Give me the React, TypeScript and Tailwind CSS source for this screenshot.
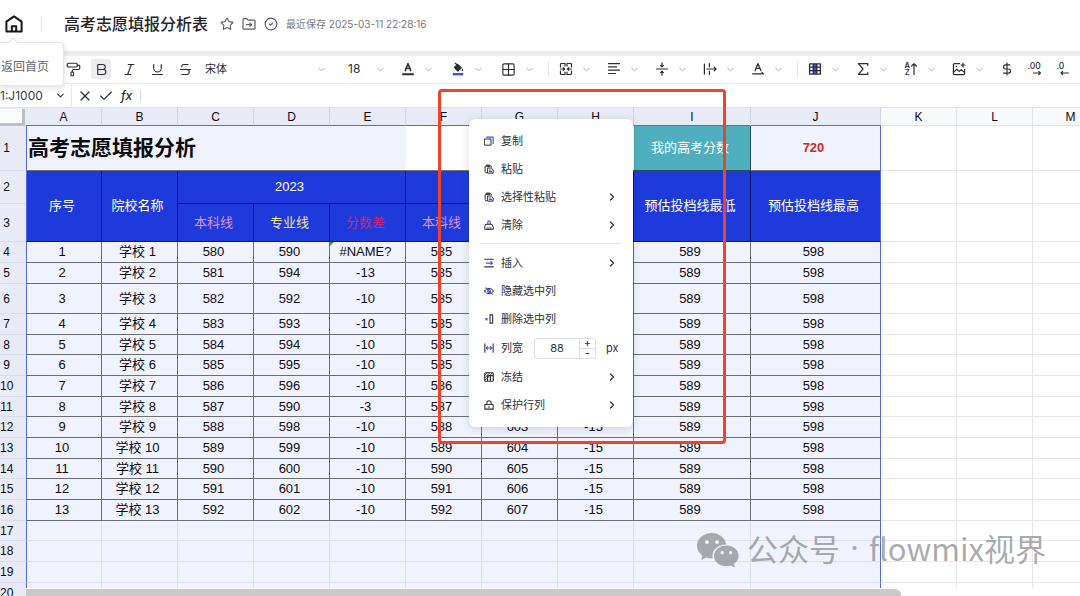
import React from 'react'
import clsx from 'clsx'
import {
  Bold,
  Check,
  ChevronDown,
  ChevronRight,
  CircleCheck,
  DollarSign,
  Grid2x2,
  Italic,
  PaintRoller,
  Star,
  Strikethrough,
  Underline,
  X
} from 'lucide-react'

interface IconProps {
  className?: string
  children: React.ReactNode
}

// 14px 网格的线性图标
function Glyph({ className = 'size-3.5', children }: IconProps) {
  return (
    <svg
      viewBox="0 0 14 14"
      fill="none"
      stroke="currentColor"
      strokeWidth="1.2"
      strokeLinecap="round"
      strokeLinejoin="round"
      className={clsx('shrink-0', className)}
      aria-hidden="true"
    >
      {children}
    </svg>
  )
}

const BLUE = '#3b50f0'

const icons = {
  fontColor: (
    <Glyph>
      <path d="M4.2 8.6 7 1.6l2.800 7M5.200 6.400h3.600" strokeWidth="1.5" />
      <path d="M2 12.200h10" strokeWidth="2" />
    </Glyph>
  ),
  bucket: (
    <Glyph>
      <path d="M3.400 5.400 6.600 2.400l3.600 3.400-3.400 3.400Z" fill="currentColor" />
      <path d="M4.200 1.200 7 3.400M11.400 7.400v1.200" />
      <path d="M1.800 12.200h10.400" stroke={BLUE} strokeWidth="2.400" strokeLinecap="butt" />
    </Glyph>
  ),
  merge: (
    <Glyph>
      <path d="M6 4V1.500H2.400a.9.9 0 0 0-.9.9V5M1.500 9v2.600a.9.9 0 0 0 .9.9H6V10M8 4V1.500h3.600a.9.9 0 0 1 .9.9V5M12.500 9v2.600a.9.9 0 0 1-.9.9H8V10" />
      <path d="M1.500 7h4M4.200 5.600 5.600 7 4.200 8.400M12.500 7h-4M9.800 5.600 8.400 7l1.400 1.400" />
    </Glyph>
  ),
  align: (
    <Glyph>
      <path d="M1.500 1.600h11M1.500 4.900h8M1.500 8.200h11M1.500 11.500h7" />
    </Glyph>
  ),
  vertical: (
    <Glyph>
      <path d="M1.500 7h11M7 .8v3.600M5.600 3.400 7 4.900l1.400-1.500M7 13.200V9.600M5.600 10.600 7 9.100l1.400 1.500" />
    </Glyph>
  ),
  overflow: (
    <Glyph>
      <path d="M1.400 2v10M6.400 1.600v3.200M6.400 9.200v3.200M4 7h9M11.200 5.200 13 7l-1.800 1.800" />
    </Glyph>
  ),
  rotate: (
    <Glyph>
      <path d="M4 8.800 7 1.600l3 7.200M5 6.400h4M1.600 11.800h10.800M11 10.400l1.400 1.400" />
    </Glyph>
  ),
  table: (
    <Glyph>
      <path d="M5 2h4v10H5Z" fill={BLUE} stroke="none" />
      <path d="M1.600 1.800h10.800v10.400H1.600ZM1.600 5.200h10.800M1.600 8.700h10.800M5.200 2v10M8.800 2v10" strokeWidth="1.300" />
    </Glyph>
  ),
  sum: (
    <Glyph>
      <path d="M11.800 3.400V1.600H2.400L7 7l-4.600 5.400h9.400v-1.800" />
    </Glyph>
  ),
  sort: (
    <Glyph>
      <text x="0.500" y="6.400" fontSize="7.500" fontWeight="600" fill="currentColor" stroke="none">A</text>
      <text x="0.700" y="13.200" fontSize="7.500" fontWeight="600" fill="currentColor" stroke="none">Z</text>
      <path d="M10 12.400V1.600M7.600 4 10 1.600 12.400 4" />
    </Glyph>
  ),
  image: (
    <Glyph>
      <path d="M7.600 1.600H2.600a1.200 1.200 0 0 0-1.200 1.200v8.600a1.200 1.200 0 0 0 1.200 1.200h8.800a1.200 1.200 0 0 0 1.200-1.200V7.400" />
      <path d="M1.600 10.400 4.800 7.200l2.400 2.200 2-1.600 3.200 2.600M11 1v4M9 3h4M4.200 4.400h.4" />
    </Glyph>
  ),
  moreDecimals: (
    <Glyph>
      <text x="-0.500" y="7.200" fontSize="8.500" fontWeight="500" fill="currentColor" stroke="none">.00</text>
      <path d="M5.400 11h7M10.800 9.400l1.600 1.600-1.600 1.600" />
    </Glyph>
  ),
  lessDecimals: (
    <Glyph>
      <text x="0.500" y="7.200" fontSize="8.500" fontWeight="500" fill="currentColor" stroke="none">.0</text>
      <path d="M5 11h7.400M6.600 9.400 5 11l1.600 1.600" />
    </Glyph>
  ),
  copy: (
    <Glyph className="size-2.5">
      <path d="M1 4.200h8.800v8.600H1Z" strokeWidth="1.400" />
      <path d="M3.600 1.600h9.200v8.800" stroke={BLUE} strokeWidth="1.600" />
    </Glyph>
  ),
  paste: (
    <Glyph className="size-2.5">
      <path d="M4.400 12.200H3A1.400 1.400 0 0 1 1.600 10.800V4A1.400 1.400 0 0 1 3 2.600h6.200A1.400 1.400 0 0 1 10.600 4M4.200 1.400h3.800v2.200H4.200Z" strokeWidth="1.400" />
      <path d="M5.600 5.600h4.600l2.600 2.600v4.600H5.600Z" strokeWidth="1.400" />
      <path d="M7.600 8.400h2.400M7.600 10.600h3" stroke={BLUE} strokeWidth="1.600" />
    </Glyph>
  ),
  clear: (
    <Glyph className="size-2.5">
      <path d="M5.400 5.400V2.600a1.600 1.600 0 0 1 3.200 0v2.800" stroke={BLUE} strokeWidth="1.600" />
      <path d="M2.800 6h8.400L13 10v3H1v-3ZM4.400 13v-2M7 13v-2M9.600 13v-2" strokeWidth="1.400" />
    </Glyph>
  ),
  insert: (
    <Glyph className="size-2.5">
      <path d="M1 1.800h12M1 12.400h12" strokeWidth="1.600" />
      <path d="M3.400 7.200h8.400M9.600 5.200l2.200 2-2.200 2" stroke={BLUE} strokeWidth="1.500" />
    </Glyph>
  ),
  hide: (
    <Glyph className="size-2.5">
      <path d="M.8 7C3.600 2 10.400 2 13.200 7 10.400 12 3.600 12 .8 7Z" strokeWidth="1.400" />
      <path d="M2.600 2.600l9 9M5 7a2 2 0 1 0 4 0 2 2 0 0 0-4 0" stroke={BLUE} strokeWidth="1.500" />
    </Glyph>
  ),
  remove: (
    <Glyph className="size-2.5">
      <path d="M8.400 1.200h3.800v11.600H8.400Z" strokeWidth="1.500" />
      <path d="M2.400 6l2.200 2.200M4.600 6 2.400 8.200" stroke={BLUE} strokeWidth="1.600" />
    </Glyph>
  ),
  width: (
    <Glyph className="size-2.5">
      <path d="M1.200 1v12M12.800 1v12" strokeWidth="1.500" />
      <path d="M3.400 7h7.200M5 5.200 3.200 7 5 8.800M9 5.200 10.800 7 9 8.800" stroke={BLUE} strokeWidth="1.500" />
    </Glyph>
  ),
  freeze: (
    <Glyph className="size-2.5">
      <path d="M2.600 1h8.800A1.600 1.600 0 0 1 13 2.600v8.800a1.600 1.600 0 0 1-1.600 1.600H2.600A1.600 1.600 0 0 1 1 11.400V2.600A1.600 1.600 0 0 1 2.600 1ZM5 13V5h8M9 5v8" strokeWidth="1.600" />
      <path d="M1 4.600 4.600 1M1 8.200 8.200 1M1 12 12 1" strokeWidth="1.300" />
    </Glyph>
  ),
  lock: (
    <Glyph className="size-2.5">
      <path d="M1.200 6.200h11.600v6.600H1.200ZM4 6V4a3 3 0 0 1 6 0v2M7 8.800v1.600" strokeWidth="1.500" />
    </Glyph>
  )
}

function Divider() {
  return <span className="h-4 w-px shrink-0 bg-[#e4e5e8]" />
}

function Caret() {
  return <ChevronDown className="size-[11px] shrink-0 text-[#a5a7ad]" strokeWidth={2} />
}

function DropButton({ label, children }: { label: string; children: React.ReactNode }) {
  return (
    <button type="button" aria-label={label} className="flex shrink-0 items-center gap-2">
      {children}
      <Caret />
    </button>
  )
}

function Header() {
  return (
    <header className="flex h-[51px] shrink-0 items-center bg-white pb-1 pl-[5px]">
      <a href="#home" aria-label="返回首页" aria-describedby="home-tip">
        <svg viewBox="0 0 18 18" fill="none" stroke="#17181c" strokeWidth="2" strokeLinejoin="round" className="size-[18px]">
          <path d="M1.400 6.600 9 1.400l7.600 5.200v9.800H1.400Z" />
          <path d="M6.800 16.400v-5.200h4.400v5.200" />
        </svg>
      </a>
      <span className="ml-[18px] h-4 w-px bg-[#e2e3e6]" />
      <h1 className="ml-[22px] text-base font-medium leading-6 text-[#23252b]">高考志愿填报分析表</h1>
      <div className="ml-3 flex items-center gap-2 text-[#5c5f66]">
        <button type="button" aria-label="收藏">
          <Star className="size-3.5" strokeWidth={2} />
        </button>
        <button type="button" aria-label="移动到">
          <Glyph>
            <path d="M1 2.400a.8.8 0 0 1 .8-.8h3l1.400 1.600h6a.8.8 0 0 1 .8.8v7.400a.8.8 0 0 1-.8.8H1.800a.8.8 0 0 1-.8-.8ZM4.400 7.600h5M7.800 5.800l1.800 1.800-1.800 1.800" />
          </Glyph>
        </button>
        <CircleCheck className="size-3.5" strokeWidth={2} />
        <span className="text-[10px] leading-4 text-[#77797f]">最近保存 2025-03-11 22:28:16</span>
      </div>
    </header>
  )
}

function HomeTip() {
  return (
    <div
      id="home-tip"
      role="tooltip"
      className="absolute left-0 top-[42px] z-20 h-11 w-16 rounded-r-[3px] border border-l-0 border-[#e6e7ea] bg-white shadow-[0_2px_6px_rgba(0,0,0,0.12)]"
    >
      <span className="absolute -top-1 left-[10px] size-[7px] rotate-45 border-l border-t border-[#e3e4e8] bg-white" />
      <p className="pl-px pt-4 text-xs leading-4 text-[#62656f]">返回首页</p>
    </div>
  )
}

function Toolbar() {
  return (
    <div className="flex h-7 shrink-0 items-center overflow-hidden border-b border-[#ebecef] bg-white pb-px pl-[63px] text-[#2b2d35]">
      <div className="flex shrink-0 gap-2">
        {[
          { label: '格式刷', Icon: PaintRoller },
          { label: '加粗', Icon: Bold, active: true },
          { label: '斜体', Icon: Italic },
          { label: '下划线', Icon: Underline },
          { label: '删除线', Icon: Strikethrough }
        ].map(({ label, Icon, active }) => (
          <button
            key={label}
            type="button"
            aria-label={label}
            aria-pressed={active}
            className={clsx('flex size-5 items-center justify-center rounded-[3px]', active && 'bg-[#ebebed]')}
          >
            <Icon className="size-[15px]" strokeWidth={1.8} />
          </button>
        ))}
      </div>
      <label className="ml-2.5 flex shrink-0 items-center">
        <select aria-label="字体" className="w-[111px] appearance-none text-[11px] leading-4 outline-none">
          <option>宋体</option>
        </select>
        <Caret />
      </label>
      <label className="ml-[21px] flex shrink-0 items-center">
        <select aria-label="字号" className="w-[27px] appearance-none text-xs leading-4 outline-none">
          <option>18</option>
        </select>
        <Caret />
      </label>
      <div className="ml-[15px] flex shrink-0 gap-[17px]">
        <DropButton label="字体颜色">{icons.fontColor}</DropButton>
        <DropButton label="填充颜色">{icons.bucket}</DropButton>
        <DropButton label="边框">
          <Grid2x2 className="size-[15px]" strokeWidth={1.8} />
        </DropButton>
      </div>
      <div className="ml-[13px] flex shrink-0 items-center">
        <Divider />
        <div className="ml-2.5 flex gap-[15px]">
          <DropButton label="合并单元格">{icons.merge}</DropButton>
          <DropButton label="水平对齐">{icons.align}</DropButton>
          <DropButton label="垂直对齐">{icons.vertical}</DropButton>
          <DropButton label="文本换行">{icons.overflow}</DropButton>
          <DropButton label="文字旋转">{icons.rotate}</DropButton>
        </div>
      </div>
      <div className="ml-[13px] flex shrink-0 items-center">
        <Divider />
        <div className="ml-2.5 flex gap-[15px]">
          <DropButton label="表格">{icons.table}</DropButton>
          <DropButton label="公式">{icons.sum}</DropButton>
          <DropButton label="排序">{icons.sort}</DropButton>
          <DropButton label="图片">{icons.image}</DropButton>
        </div>
      </div>
      <div className="ml-[15px] flex shrink-0 gap-3.5">
        <button type="button" aria-label="货币">
          <DollarSign className="size-3.5" strokeWidth={2} />
        </button>
        <button type="button" aria-label="增加小数位">{icons.moreDecimals}</button>
        <button type="button" aria-label="减少小数位">{icons.lessDecimals}</button>
      </div>
    </div>
  )
}

function FormulaBar() {
  return (
    <div className="flex h-[23px] shrink-0 items-center bg-white text-[#2b2d35]">
      <div className="flex h-full w-[72px] items-center border-r border-[#e6e7ea]">
        <input
          aria-label="名称框"
          defaultValue="1:J1000"
          className="w-[55px] text-xs leading-4 text-[#3a3c44] outline-none"
        />
        <ChevronDown className="size-[11px]" strokeWidth={2.2} />
      </div>
      <div className="ml-[5px] flex items-center gap-[5px]">
        <button type="button" aria-label="取消">
          <X className="size-4" strokeWidth={1.8} />
        </button>
        <button type="button" aria-label="确认">
          <Check className="size-4" strokeWidth={1.8} />
        </button>
        <button type="button" aria-label="插入函数" className="pl-0.5 text-xs font-medium italic leading-4">
          fx
        </button>
      </div>
      <span className="ml-2 h-3 w-px bg-[#dcdde0]" />
      <input aria-label="公式" className="min-w-0 flex-1 px-2 text-xs outline-none" />
    </div>
  )
}

const letters = ['A', 'B', 'C', 'D', 'E', 'F', 'G', 'H', 'I', 'J', 'K', 'L', 'M']

// C、D、E、F 列，G 列为 F 列加 15
const records: Array<[number, number, string, number]> = [
  [580, 590, '#NAME?', 585],
  [581, 594, '-13', 585],
  [582, 592, '-10', 585],
  [583, 593, '-10', 585],
  [584, 594, '-10', 585],
  [585, 595, '-10', 585],
  [586, 596, '-10', 586],
  [587, 590, '-3', 587],
  [588, 598, '-10', 588],
  [589, 599, '-10', 589],
  [590, 600, '-10', 590],
  [591, 601, '-10', 591],
  [592, 602, '-10', 592]
]

function rowHeight(row: number) {
  if (row === 6) return 'h-[30px]'
  if (row > 7 && row % 3 === 2) return 'h-5'
  return 'h-[21px]'
}

function RowHead({ row }: { row: number }) {
  return (
    <th scope="row" className="border-b border-[#d9dcea] bg-[#e8eaf6] pr-[13px] text-center text-xs font-normal leading-4">
      {row}
    </th>
  )
}

// 选区右侧的空白单元格
function Blank() {
  return (
    <>
      {['K', 'L', 'M'].map((c) => (
        <td key={c} className="border-b border-r border-[#e6e7e9] bg-white" />
      ))}
    </>
  )
}

const line = 'border-b border-r border-black/55'
const lineEnd = 'border-b border-r border-b-black/55 border-r-[#5468ec]'
const head = 'bg-[#1f3adb] pr-1 text-white'
const body = 'bg-[#f0f3fd] pr-1'

function Sheet() {
  return (
    <table className="w-[1108px] table-fixed border-separate border-spacing-0 text-center font-['Liberation_Sans','Noto_Sans_CJK_SC',sans-serif] text-[13px] leading-4 text-[#0b0c12]">
      <colgroup>
        <col className="w-[26px]" />
        {letters.map((c) => (
          <col key={c} className={c === 'I' ? 'w-[117px]' : c === 'J' ? 'w-[130px]' : 'w-[76px]'} />
        ))}
      </colgroup>
      <thead>
        <tr className="h-[19px] text-xs leading-4">
          <td className="border-t border-[#e2e3e8] bg-[#e8eaf6] p-0">
            <div className="h-[17px] w-[25px] border-b-[3px] border-r-[3px] border-[#bfbfbf] bg-[#fafbfc]" />
          </td>
          {letters.map((c) => (
            <th
              key={c}
              scope="col"
              className={clsx(
                'border-b border-r border-t p-0 font-normal',
                c < 'K'
                  ? 'border-b-[#5468ec] border-r-[#d3d6e6] border-t-[#e2e3e8] bg-[#e8eaf6]'
                  : 'border-[#e2e3e6] bg-[#f8f9fb]'
              )}
            >
              {c}
            </th>
          ))}
        </tr>
      </thead>
      <tbody>
        <tr className="h-[45px]">
          <RowHead row={1} />
          <td
            colSpan={5}
            className="border-b border-l border-b-black/55 border-l-[#5468ec] bg-[#f0f3fd] pl-px text-left text-[21px] font-bold leading-7"
          >
            高考志愿填报分析
          </td>
          <td colSpan={3} className="border-b border-black/55 bg-white" />
          <td className={clsx(line, 'bg-[#50afbe] pr-1 text-white')}>我的高考分数</td>
          <td className={clsx(lineEnd, body, 'font-bold text-[#cc2a28]')}>720</td>
          <Blank />
        </tr>
        <tr className="h-[33px]">
          <RowHead row={2} />
          <td rowSpan={2} className={clsx(line, head, 'border-l border-l-[#5468ec]')}>序号</td>
          <td rowSpan={2} className={clsx(line, head)}>院校名称</td>
          <td colSpan={3} className={clsx(line, head)}>2023</td>
          <td colSpan={3} className={clsx(line, head)}>2024</td>
          <td rowSpan={2} className={clsx(line, head)}>预估投档线最低</td>
          <td rowSpan={2} className={clsx(lineEnd, head)}>预估投档线最高</td>
          <Blank />
        </tr>
        <tr className="h-[38px]">
          <RowHead row={3} />
          {[2023, 2024].map((year) => (
            <React.Fragment key={year}>
              <td className={clsx(line, 'bg-[#1f3adb] pr-1 text-[#dc92dc]')}>本科线</td>
              <td className={clsx(line, 'bg-[#1f3adb] pr-1 text-[#f0e68c]')}>专业线</td>
              <td className={clsx(line, 'bg-[#1f3adb] pr-1 text-[#c02a80]')}>分数差</td>
            </React.Fragment>
          ))}
          <Blank />
        </tr>
        {records.map(([c, d, e, f], i) => (
          <tr key={i} className={rowHeight(i + 4)}>
            <RowHead row={i + 4} />
            <td className={clsx(line, body, 'border-l border-l-[#5468ec]')}>{i + 1}</td>
            <td className={clsx(line, body)}>学校 {i + 1}</td>
            <td className={clsx(line, body)}>{c}</td>
            <td className={clsx(line, body)}>{d}</td>
            <td className={clsx(line, body, 'relative')}>
              {e.startsWith('#') && (
                <svg viewBox="0 0 4 4" className="absolute left-0 top-0 size-1 fill-[#4a9a3c]">
                  <path d="M0 0h4L0 4Z" />
                </svg>
              )}
              {e}
            </td>
            <td className={clsx(line, body)}>{f}</td>
            <td className={clsx(line, body)}>{f + 15}</td>
            <td className={clsx(line, body)}>-15</td>
            <td className={clsx(line, body)}>589</td>
            <td className={clsx(lineEnd, body)}>598</td>
            <Blank />
          </tr>
        ))}
        {[17, 18, 19, 20].map((row) => (
          <tr key={row} className={rowHeight(row)}>
            <RowHead row={row} />
            {letters.slice(0, 10).map((c) => (
              <td
                key={c}
                className={clsx(
                  'border-b border-r border-b-[#dbdeec] bg-[#f0f3fd]',
                  c === 'A' && 'border-l border-l-[#5468ec]',
                  c === 'J' ? 'border-r-[#5468ec]' : 'border-r-[#dbdeec]'
                )}
              />
            ))}
            <Blank />
          </tr>
        ))}
      </tbody>
    </table>
  )
}

interface MenuItemProps {
  icon: React.ReactNode
  label: string
  more?: boolean
}

function MenuItem({ icon, label, more }: MenuItemProps) {
  return (
    <button type="button" role="menuitem" className="flex h-7 w-full items-center gap-[7px] pl-[15px] pr-[15px]">
      {icon}
      <span>{label}</span>
      {more && <ChevronRight className="ml-auto size-3" strokeWidth={2.4} />}
    </button>
  )
}

function ContextMenu() {
  return (
    <div
      role="menu"
      className="absolute left-[469px] top-[119px] z-10 w-[164px] rounded-md bg-white py-2 text-[11px] leading-4 text-[#2f3138] shadow-[0_2px_8px_rgba(0,0,0,0.14)]"
    >
      <MenuItem icon={icons.copy} label="复制" />
      <MenuItem icon={icons.paste} label="粘贴" />
      <MenuItem icon={icons.paste} label="选择性粘贴" more />
      <MenuItem icon={icons.clear} label="清除" more />
      <hr className="mx-[11px] mb-[5px] mt-1 border-[#e6e7ea]" />
      <MenuItem icon={icons.insert} label="插入" more />
      <MenuItem icon={icons.hide} label="隐藏选中列" />
      <MenuItem icon={icons.remove} label="删除选中列" />
      <div className="flex h-[30px] items-center pl-[15px]">
        {icons.width}
        <label htmlFor="col-width" className="ml-[7px]">列宽</label>
        <div className="ml-[11px] flex h-[21px] w-[62px] overflow-hidden rounded-[3px] border border-[#dcdee3]">
          <input id="col-width" defaultValue="88" className="w-11 text-center text-[11px] outline-none" />
          <div className="flex flex-1 flex-col border-l border-[#dcdee3] text-[11px] leading-[9px]">
            <button type="button" aria-label="增加" className="flex-1 border-b border-[#dcdee3]">+</button>
            <button type="button" aria-label="减少" className="flex-1">-</button>
          </div>
        </div>
        <span className="ml-2.5">px</span>
      </div>
      <MenuItem icon={icons.freeze} label="冻结" more />
      <MenuItem icon={icons.lock} label="保护行列" more />
    </div>
  )
}

function Watermark() {
  return (
    <div className="pointer-events-none absolute bottom-6 right-[34px] z-10 flex items-center gap-2 text-[#8f8f92]/75">
      <svg viewBox="0 0 42 35" className="h-[35px] w-[42px]" fill="currentColor">
        <path
          fillRule="evenodd"
          d="M15 0C6.500 0 0 5.600 0 12.800c0 4 2 7.400 5.400 9.800L4.200 27l5-2.600c1.800.6 3.600.9 5.600.9h1C14 17.600 20.500 11.600 29.400 11.600 28 4.800 22.200 0 15 0ZM10 7a2 2 0 1 1 0 4 2 2 0 0 1 0-4Zm10 0a2 2 0 1 1 0 4 2 2 0 0 1 0-4Z"
        />
        <path
          fillRule="evenodd"
          d="M29.400 12.600c-7 0-12.400 4.600-12.400 10.400S22.400 33.200 29.400 33.200c1.600 0 3-.2 4.400-.7l4 2-1-3.600c3-2 4.800-4.800 4.800-8 0-5.800-5.400-10.300-12.200-10.300ZM25.200 18a1.700 1.700 0 1 1 0 3.400 1.700 1.700 0 0 1 0-3.400Zm8.400 0a1.700 1.700 0 1 1 0 3.400 1.700 1.700 0 0 1 0-3.400Z"
        />
      </svg>
      <p className="flex gap-2.5 pb-1 font-['Noto_Sans_CJK_SC',sans-serif] text-[31px] leading-10">
        <span>公众号</span>
        <span className="font-['Inter',sans-serif]">·</span>
        <span>flowmix视界</span>
      </p>
    </div>
  )
}

export default function App() {
  return (
    <div className="relative flex h-screen flex-col overflow-hidden bg-white font-['Inter','Noto_Sans_CJK_SC',sans-serif]">
      <Header />
      <div className="h-[5px] shrink-0 bg-linear-to-b from-[#e8e9eb] to-[#f0f1f3]" />
      <Toolbar />
      <FormulaBar />
      <main className="relative min-h-0 flex-1 overflow-hidden">
        <Sheet />
        <div className="absolute bottom-0 left-[26px] right-0 h-2 bg-white pt-px">
          <div className="h-[7px] w-[83%] rounded-tr-md bg-[#c9c9c9]" />
        </div>
      </main>
      <HomeTip />
      <ContextMenu />
      <Watermark />
      <div className="pointer-events-none absolute left-[438px] top-[89px] z-20 h-[355px] w-[288px] rounded border-[3px] border-[#ee4328]" />
    </div>
  )
}
